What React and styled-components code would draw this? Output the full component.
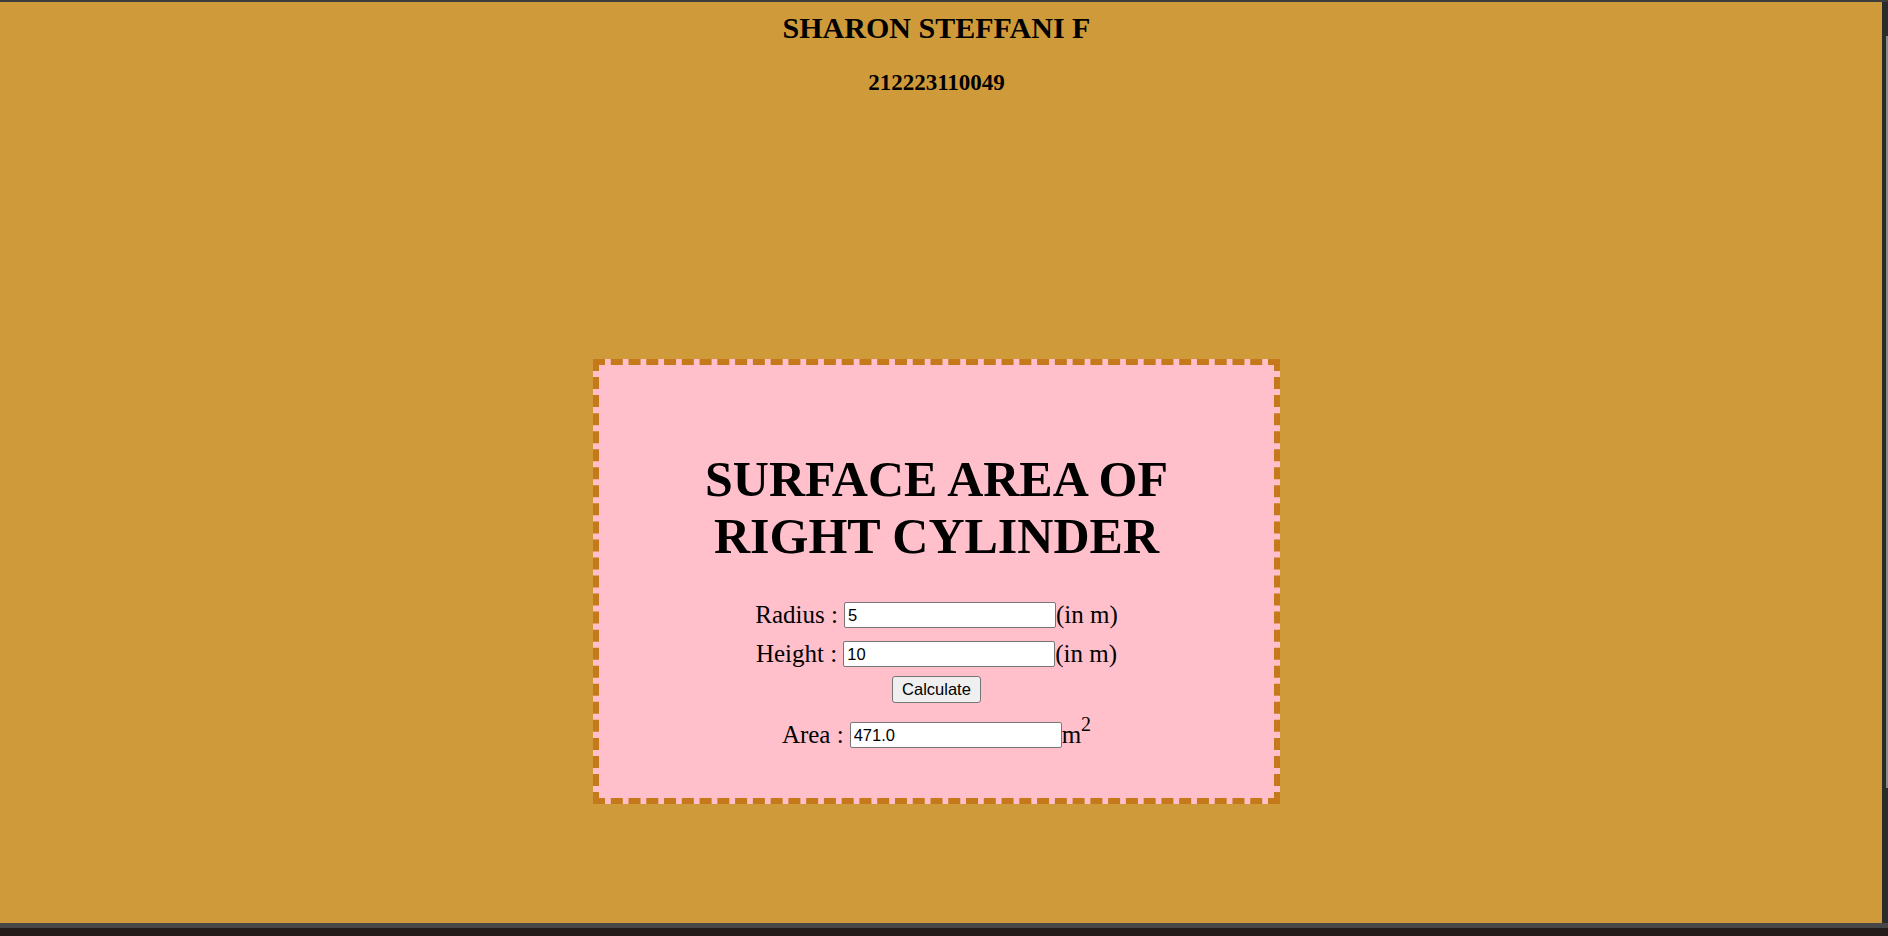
// App.jsx
import React, { useState } from "react";
import styled, { createGlobalStyle } from "styled-components";

const GlobalStyle = createGlobalStyle`
  html, body {
    margin: 0;
    padding: 0;
    background: #2b2b2b;
    overflow: hidden;
  }
`;

const Frame = styled.div`
  width: 1888px;
  height: 936px;
  display: flex;
  flex-direction: column;
  background: #2b2b2b;
`;

const TopEdge = styled.div`
  height: 2px;
  background: #3d3d3d;
`;

const Middle = styled.div`
  display: flex;
  height: 921px;
`;

const Page = styled.div`
  width: 1882px;
  box-sizing: border-box;
  padding: 9px 9px 0 0;
  background-color: #cf9a39;
  font-family: "Liberation Serif", "Times New Roman", serif;
  color: #000;
`;

const ScrollTrack = styled.div`
  width: 6px;
  background: #2b2b2b;
  display: flex;
  justify-content: flex-end;
  padding-top: 34px;
`;

const ScrollThumb = styled.div`
  width: 2px;
  height: 752px;
  background: #8a8a8a;
`;

const BottomEdge = styled.div`
  height: 5px;
  background: #474747;
`;

const Taskbar = styled.div`
  flex: 1;
  background: #241c1a;
`;

const Name = styled.h2`
  margin: 0;
  font-size: 30px;
  line-height: 34px;
  text-align: center;
  font-weight: bold;
`;

const RegNo = styled.h3`
  margin: 24px 0 0;
  font-size: 23px;
  line-height: 27px;
  text-align: center;
  font-weight: bold;
`;

const Card = styled.div`
  width: 675px;
  margin: 263px 0 0 593px;
  border: 6px dashed #c5791a;
  background-color: pink;
  padding: 86px 0 41px;
  text-align: center;
`;

const Title = styled.h1`
  margin: 0 0 31px;
  font-size: 50px;
  line-height: 57px;
  font-weight: bold;
`;

const Row = styled.div`
  display: flex;
  justify-content: center;
  align-items: center;
  height: ${(p) => p.h}px;
  margin-top: ${(p) => p.gap || 0}px;
  font-size: 25px;
`;

const Label = styled.span`
  margin-right: 6px;
`;

const Input = styled.input`
  width: 212px;
  height: 26px;
  box-sizing: border-box;
  border: 1px solid #767676;
  border-radius: 2px;
  padding: 1px 3px;
  font-family: "Liberation Sans", Arial, sans-serif;
  font-size: 16.5px;
  background: #fff;
  color: #000;
  outline: none;
`;

const Button = styled.button`
  width: 89px;
  height: 27px;
  box-sizing: border-box;
  border: 1px solid #767676;
  border-radius: 3px;
  background: #efefef;
  font-family: "Liberation Sans", Arial, sans-serif;
  font-size: 16.5px;
  color: #000;
  padding: 0;
`;

const Sup = styled.sup`
  font-size: 20px;
  line-height: 0;
  position: relative;
  top: -3px;
`;

const App = () => {
  const [radius, setRadius] = useState("5");
  const [height, setHeight] = useState("10");
  const [area, setArea] = useState("471.0");

  const calculate = () => {
    const r = parseFloat(radius);
    const h = parseFloat(height);
    const a = 2 * 3.14 * r * (r + h);
    setArea(a.toFixed(1));
  };

  return (
    <>
      <GlobalStyle />
      <Frame>
        <TopEdge />
        <Middle>
          <Page>
            <Name>SHARON STEFFANI F</Name>
            <RegNo>212223110049</RegNo>
            <Card>
              <Title>
                SURFACE AREA OF
                <br />
                RIGHT CYLINDER
              </Title>
              <Row h={38}>
                <Label>Radius :</Label>
                <Input value={radius} onChange={(e) => setRadius(e.target.value)} />
                <span>(in m)</span>
              </Row>
              <Row h={40}>
                <Label>Height :</Label>
                <Input value={height} onChange={(e) => setHeight(e.target.value)} />
                <span>(in m)</span>
              </Row>
              <Row h={30}>
                <Button type="button" onClick={calculate}>
                  Calculate
                </Button>
              </Row>
              <Row h={44} gap={9}>
                <Label>Area :</Label>
                <Input value={area} readOnly />
                <span>
                  m<Sup>2</Sup>
                </span>
              </Row>
            </Card>
          </Page>
          <ScrollTrack>
            <ScrollThumb />
          </ScrollTrack>
        </Middle>
        <BottomEdge />
        <Taskbar />
      </Frame>
    </>
  );
};

export default App;
